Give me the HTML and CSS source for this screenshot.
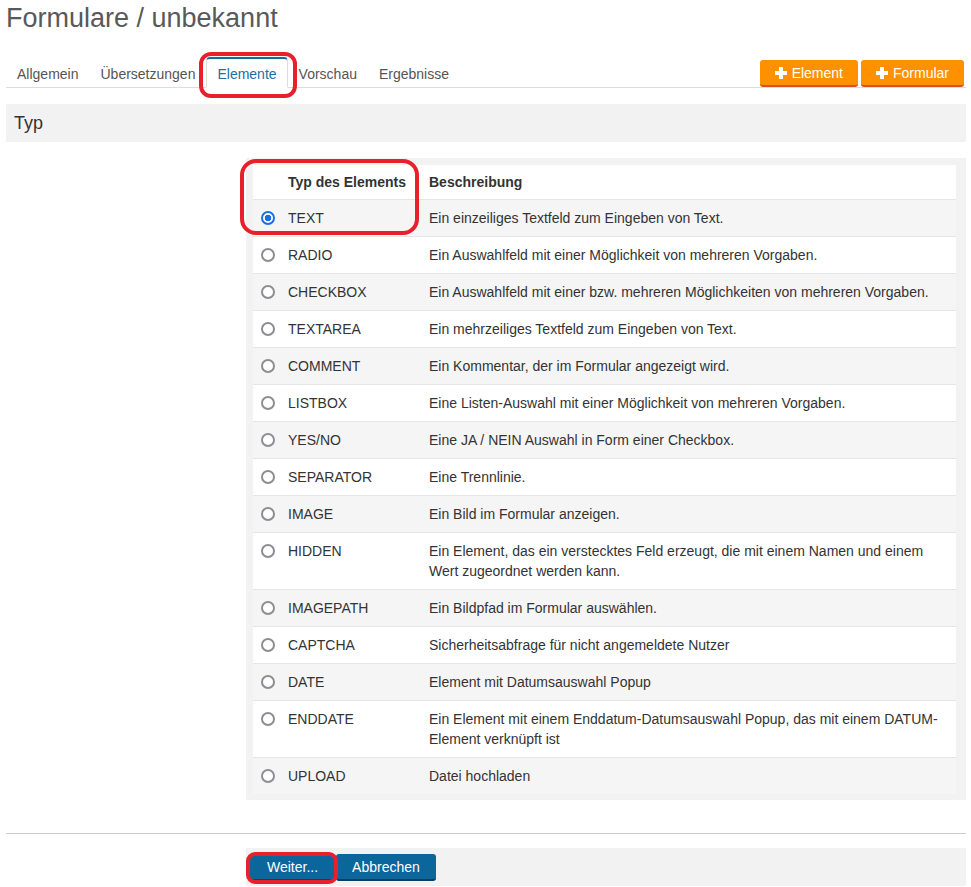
FILE: index.html
```html
<!DOCTYPE html>
<html lang="de">
<head>
<meta charset="utf-8">
<title>Formulare / unbekannt</title>
<link rel="stylesheet" href="styles.css">
</head>
<body>
<div class="page">
  <h1 class="title">Formulare / unbekannt</h1>
  <div class="tabbar">
    <ul class="tabs">
      <li class="tab">Allgemein</li>
      <li class="tab">Übersetzungen</li>
      <li class="tab active">Elemente</li>
      <li class="tab">Vorschau</li>
      <li class="tab">Ergebnisse</li>
    </ul>
    <div class="actions">
      <button class="btn btn-orange"><svg class="plus" viewBox="0 0 12 12" width="12" height="12"><path d="M4 0h4v4h4v4H8v4H4V8H0V4h4z" fill="#fff"/></svg>Element</button>
      <button class="btn btn-orange"><svg class="plus" viewBox="0 0 12 12" width="12" height="12"><path d="M4 0h4v4h4v4H8v4H4V8H0V4h4z" fill="#fff"/></svg>Formular</button>
    </div>
  </div>

  <div class="section-head">Typ</div>

  <div class="form-row">
    <div class="panel">
      <table class="types">
        <thead>
          <tr>
            <th class="c-sel"></th>
            <th class="c-type">Typ des Elements</th>
            <th class="c-desc">Beschreibung</th>
          </tr>
        </thead>
        <tbody>
          <tr><td class="c-sel"><input type="radio" name="t" checked></td><td>TEXT</td><td>Ein einzeiliges Textfeld zum Eingeben von Text.</td></tr>
          <tr><td class="c-sel"><input type="radio" name="t"></td><td>RADIO</td><td>Ein Auswahlfeld mit einer Möglichkeit von mehreren Vorgaben.</td></tr>
          <tr><td class="c-sel"><input type="radio" name="t"></td><td>CHECKBOX</td><td>Ein Auswahlfeld mit einer bzw. mehreren Möglichkeiten von mehreren Vorgaben.</td></tr>
          <tr><td class="c-sel"><input type="radio" name="t"></td><td>TEXTAREA</td><td>Ein mehrzeiliges Textfeld zum Eingeben von Text.</td></tr>
          <tr><td class="c-sel"><input type="radio" name="t"></td><td>COMMENT</td><td>Ein Kommentar, der im Formular angezeigt wird.</td></tr>
          <tr><td class="c-sel"><input type="radio" name="t"></td><td>LISTBOX</td><td>Eine Listen-Auswahl mit einer Möglichkeit von mehreren Vorgaben.</td></tr>
          <tr><td class="c-sel"><input type="radio" name="t"></td><td>YES/NO</td><td>Eine JA / NEIN Auswahl in Form einer Checkbox.</td></tr>
          <tr><td class="c-sel"><input type="radio" name="t"></td><td>SEPARATOR</td><td>Eine Trennlinie.</td></tr>
          <tr><td class="c-sel"><input type="radio" name="t"></td><td>IMAGE</td><td>Ein Bild im Formular anzeigen.</td></tr>
          <tr><td class="c-sel"><input type="radio" name="t"></td><td>HIDDEN</td><td>Ein Element, das ein verstecktes Feld erzeugt, die mit einem Namen und einem Wert zugeordnet werden kann.</td></tr>
          <tr><td class="c-sel"><input type="radio" name="t"></td><td>IMAGEPATH</td><td>Ein Bildpfad im Formular auswählen.</td></tr>
          <tr><td class="c-sel"><input type="radio" name="t"></td><td>CAPTCHA</td><td>Sicherheitsabfrage für nicht angemeldete Nutzer</td></tr>
          <tr><td class="c-sel"><input type="radio" name="t"></td><td>DATE</td><td>Element mit Datumsauswahl Popup</td></tr>
          <tr><td class="c-sel"><input type="radio" name="t"></td><td>ENDDATE</td><td>Ein Element mit einem Enddatum-Datumsauswahl Popup, das mit einem DATUM-Element verknüpft ist</td></tr>
          <tr><td class="c-sel"><input type="radio" name="t"></td><td>UPLOAD</td><td>Datei hochladen</td></tr>
        </tbody>
      </table>
    </div>
  </div>

  <hr class="sep">

  <div class="form-row">
    <div class="btnbar">
      <button class="btn btn-blue">Weiter...</button>
      <button class="btn btn-blue btn-second">Abbrechen</button>
    </div>
  </div>
</div>

<div class="mark mark-tab"></div>
<div class="mark mark-head"></div>
<div class="mark mark-next"></div>
</body>
</html>
```

FILE: styles.css
```css
html, body {
  margin: 0;
  padding: 0;
  background: #fff;
}
body {
  font-family: "Liberation Sans", Arial, sans-serif;
  font-size: 14px;
  line-height: 20px;
  color: #333;
}
.page {
  margin: 0 5px 0 6px;
}
.title {
  margin: 3px 0 0 0;
  font-size: 27px;
  line-height: 30px;
  font-weight: normal;
  color: #595959;
}
.tabbar {
  margin-top: 24px;
  display: flex;
  justify-content: space-between;
  align-items: flex-end;
  border-bottom: 1px solid #ddd;
}
.tabs {
  list-style: none;
  margin: 0 0 -1px 0;
  padding: 0;
  display: flex;
}
.tab {
  border: 1px solid transparent;
  border-top-width: 2px;
  padding: 5px 10px 3px;
  color: #555;
  border-radius: 4px 4px 0 0;
}
.tab.active {
  border-color: #ddd;
  border-top-color: #1b6a9c;
  border-bottom-color: #fff;
  background: #fff;
  color: #1c6ea4;
}
.actions {
  display: flex;
  gap: 3px;
  margin-right: 2px;
}
.btn {
  font-family: "Liberation Sans", Arial, sans-serif;
  font-size: 14px;
  line-height: 20px;
  color: #fff;
  border: 0;
  border-radius: 3px;
  cursor: pointer;
  display: inline-flex;
  align-items: center;
}
.btn-orange {
  background: #ff9100;
  border-bottom: 2px solid #d9512b;
  padding: 3px 15px 2px;
}
.plus {
  margin-right: 5px;
  display: block;
}
.section-head {
  margin-top: 16px;
  background: #f2f2f2;
  height: 38px;
  line-height: 38px;
  font-size: 18px;
  padding-left: 8px;
  color: #333;
}
.form-row {
  padding-left: 240px;
}
.panel {
  margin-top: 16px;
  background: #f2f2f2;
  padding: 7px 10px 6px 7px;
}
.types {
  width: 100%;
  border-collapse: collapse;
  table-layout: fixed;
  background: #fff;
}
.types th, .types td {
  box-sizing: border-box;
  text-align: left;
  vertical-align: top;
  padding: 8px;
}
.types th {
  padding-top: 7px;
  padding-bottom: 7px;
  font-weight: bold;
}
.types tbody td {
  border-top: 1px solid #e6e6e6;
}
.types tbody tr:nth-child(odd) td {
  background: #f5f5f5;
}
.types .c-sel {
  width: 27px;
  padding-right: 5px;
}
.types .c-type {
  width: 141px;
}
.types input[type="radio"] {
  -webkit-appearance: none;
  appearance: none;
  display: block;
  box-sizing: border-box;
  margin: 3px 0 3px 0;
  width: 14px;
  height: 14px;
  border: 2px solid #8d8d95;
  border-radius: 50%;
  background: #fff;
}
.types input[type="radio"]:checked {
  border-color: #1a6fe3;
  background: radial-gradient(circle, #1a6fe3 0 3px, #fff 3.6px);
}
.sep {
  margin: 33px 0 0 0;
  border: 0;
  border-top: 1px solid #ccc;
  height: 0;
}
.btnbar {
  margin-top: 14px;
  background: #f2f2f2;
  padding: 6px 4px 5px;
  display: flex;
}
.btn-blue {
  background: #0b669c;
  border-bottom: 2px solid #083f63;
  padding: 3px 17px 2px;
}
.btn-second {
  margin-left: 1px;
  padding: 3px 16px 2px;
}
.mark {
  position: absolute;
  border: 4px solid #e8202b;
  box-sizing: border-box;
  pointer-events: none;
}
.mark-tab {
  left: 199px;
  top: 52px;
  width: 98px;
  height: 46px;
  border-radius: 12px;
}
.mark-head {
  left: 240px;
  top: 159px;
  width: 179px;
  height: 76px;
  border-radius: 16px;
}
.mark-next {
  left: 246px;
  top: 852px;
  width: 92px;
  height: 32px;
  border-radius: 9px;
}
```
